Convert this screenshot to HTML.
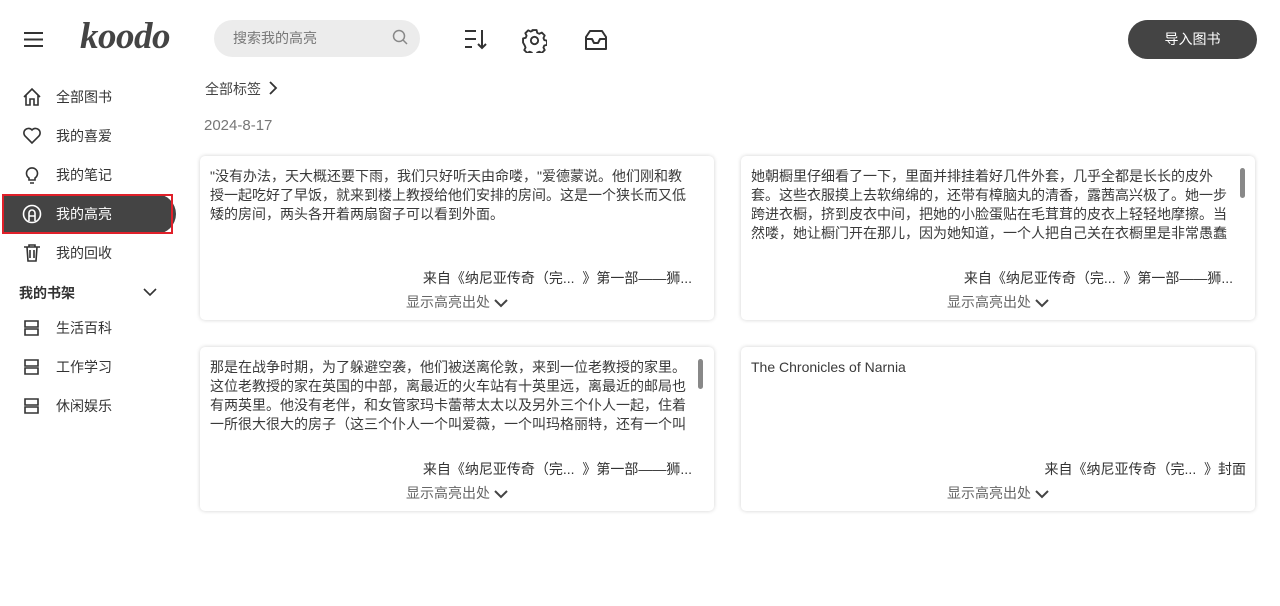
<!DOCTYPE html>
<html><head><meta charset="utf-8"><style>
*{margin:0;padding:0;box-sizing:border-box}
body{width:1280px;height:606px;background:#fff;font-family:"Liberation Sans","Noto Sans CJK SC",sans-serif;color:#333;position:relative;overflow:hidden}
.abs{position:absolute}
.nav{position:absolute;left:22px;font-size:14px;color:#333;display:flex;align-items:center}
.nav span{position:absolute;left:34px;white-space:nowrap}
.card{position:absolute;width:514px;height:164px;background:#fff;border-radius:5px;box-shadow:0 0 4px rgba(0,0,0,.18)}
.txt{position:absolute;left:10px;top:11px;width:478px;height:74px;overflow:hidden;font-size:14px;line-height:19px;color:#3a3a3a}
.src{position:absolute;right:22px;top:112px;font-size:14px;color:#333;white-space:nowrap}
.show{position:absolute;left:206px;top:136px;font-size:14px;color:#666;white-space:nowrap}
.show svg{vertical-align:middle;margin-left:4px}
.sb{position:absolute;width:5px;height:30px;background:#888;border-radius:3px;top:12px}
</style></head><body>
<svg class="abs" style="left:24px;top:31px" width="19" height="17"><path d="M0 2H19M0 8.5H19M0 15H19" stroke="#333" stroke-width="2"/></svg>
<div class="abs" style="left:80px;top:15px;font-family:'Liberation Serif',serif;font-style:italic;font-weight:bold;font-size:37px;color:#444;letter-spacing:-0.5px">koodo</div>
<div class="abs" style="left:214px;top:20px;width:206px;height:37px;background:#ececec;border-radius:19px"></div>
<div class="abs" style="left:233px;top:28px;font-size:14px;color:#777">搜索我的高亮</div>
<svg class="abs" style="left:392px;top:29px" width="17" height="17"><circle cx="7" cy="7" r="5.5" stroke="#888" stroke-width="1.5" fill="none"/><path d="M11 11L15 15" stroke="#888" stroke-width="1.5"/></svg>
<svg class="abs" style="left:464px;top:29px" width="24" height="22"><path d="M1 2H12M1 10H12M1 18H8M18 1V19M14 15L18 19L22 15" stroke="#333" stroke-width="2" fill="none"/></svg>
<svg class="abs" style="left:522px;top:28px" width="25" height="25" viewBox="0 0 24 24"><path d="M10 2h4l.6 2.6 2 1 2.4-1.2 2.8 2.8-1.2 2.4.8 2 2.6.6v4l-2.6.6-.8 2 1.2 2.4-2.8 2.8-2.4-1.2-2 .8-.6 2.6h-4l-.6-2.6-2-.8-2.4 1.2-2.8-2.8 1.2-2.4-.8-2L1 14v-4l2.6-.6.8-2-1.2-2.4 2.8-2.8 2.4 1.2 2-1z" stroke="#333" stroke-width="1.8" fill="none" stroke-linejoin="round"/><circle cx="12" cy="12" r="3.5" stroke="#333" stroke-width="1.8" fill="none"/></svg>
<svg class="abs" style="left:584px;top:29px" width="24" height="23"><path d="M2 8L6 2H18L22 8V20H2Z M2 10H8L10 14H14L16 10H22" stroke="#333" stroke-width="2" fill="none" stroke-linejoin="round"/></svg>
<div class="abs" style="left:1128px;top:20px;width:129px;height:39px;background:#444;border-radius:20px;color:#fff;font-size:14px;text-align:center;line-height:39px">导入图书</div>

<div class="nav" style="top:87px"><svg width="20" height="20"><path d="M2 10L10 2L18 10M4 8V18H8V12H12V18H16V8" stroke="#333" stroke-width="1.6" fill="none"/></svg><span>全部图书</span></div>
<div class="nav" style="top:126px"><svg width="20" height="20"><path d="M10 17L3 10A4 4 0 0 1 10 4A4 4 0 0 1 17 10Z" stroke="#333" stroke-width="1.6" fill="none"/></svg><span>我的喜爱</span></div>
<div class="nav" style="top:165px"><svg width="20" height="20"><path d="M7 13A5.5 5.5 0 1 1 13 13V15H7Z M8 18H12" stroke="#333" stroke-width="1.6" fill="none"/></svg><span>我的笔记</span></div>
<div class="abs" style="left:2px;top:194px;width:174px;height:40px;background:#444;border-radius:0 20px 20px 0"></div>
<div class="abs" style="left:2px;top:194px;width:171px;height:40px;border:2px solid #e0202a"></div>
<div class="nav" style="top:204px;color:#fff"><svg width="20" height="20"><circle cx="10" cy="10" r="8.5" stroke="#fff" stroke-width="1.6" fill="none"/><path d="M7 17V9A3 3 0 0 1 13 9V17M7 12H13" stroke="#fff" stroke-width="1.6" fill="none"/></svg><span>我的高亮</span></div>
<div class="nav" style="top:243px"><svg width="20" height="20"><path d="M2 4H18M5 4L6 18H14L15 4M8 7V15M12 7V15M7 4V2H13V4" stroke="#333" stroke-width="1.6" fill="none"/></svg><span>我的回收</span></div>
<div class="abs" style="left:19px;top:283px;font-size:14px;font-weight:bold;color:#333">我的书架</div>
<svg class="abs" style="left:143px;top:288px" width="14" height="9"><path d="M1 1L7 7L13 1" stroke="#333" stroke-width="1.6" fill="none"/></svg>
<div class="nav" style="top:318px"><svg width="20" height="20"><path d="M3 3H16V9H3ZM3 11H16V17H3Z" stroke="#333" stroke-width="1.6" fill="none"/></svg><span>生活百科</span></div>
<div class="nav" style="top:357px"><svg width="20" height="20"><path d="M3 3H16V9H3ZM3 11H16V17H3Z" stroke="#333" stroke-width="1.6" fill="none"/></svg><span>工作学习</span></div>
<div class="nav" style="top:396px"><svg width="20" height="20"><path d="M3 3H16V9H3ZM3 11H16V17H3Z" stroke="#333" stroke-width="1.6" fill="none"/></svg><span>休闲娱乐</span></div>

<div class="abs" style="left:205px;top:79px;font-size:14px;color:#444">全部标签</div>
<svg class="abs" style="left:269px;top:81px" width="9" height="14"><path d="M1 1L7 7L1 13" stroke="#333" stroke-width="1.8" fill="none"/></svg>
<div class="abs" style="left:204px;top:117px;font-size:15px;color:#777">2024-8-17</div>

<div class="card" style="left:200px;top:156px"><div class="txt">"没有办法，天大概还要下雨，我们只好听天由命喽，"爱德蒙说。他们刚和教授一起吃好了早饭，就来到楼上教授给他们安排的房间。这是一个狭长而又低矮的房间，两头各开着两扇窗子可以看到外面。</div><div class="src">来自《纳尼亚传奇（完...&nbsp;&nbsp;》第一部——狮...</div><div class="show">显示高亮出处<svg width="14" height="9"><path d="M1 1L7 7L13 1" stroke="#444" stroke-width="2" fill="none"/></svg></div></div>
<div class="card" style="left:741px;top:156px"><div class="txt">她朝橱里仔细看了一下，里面并排挂着好几件外套，几乎全都是长长的皮外套。这些衣服摸上去软绵绵的，还带有樟脑丸的清香，露茜高兴极了。她一步跨进衣橱，挤到皮衣中间，把她的小脸蛋贴在毛茸茸的皮衣上轻轻地摩擦。当然喽，她让橱门开在那儿，因为她知道，一个人把自己关在衣橱里是非常愚蠢的。</div><div class="sb" style="left:499px"></div><div class="src">来自《纳尼亚传奇（完...&nbsp;&nbsp;》第一部——狮...</div><div class="show">显示高亮出处<svg width="14" height="9"><path d="M1 1L7 7L13 1" stroke="#444" stroke-width="2" fill="none"/></svg></div></div>
<div class="card" style="left:200px;top:347px"><div class="txt">那是在战争时期，为了躲避空袭，他们被送离伦敦，来到一位老教授的家里。这位老教授的家在英国的中部，离最近的火车站有十英里远，离最近的邮局也有两英里。他没有老伴，和女管家玛卡蕾蒂太太以及另外三个仆人一起，住着一所很大很大的房子（这三个仆人一个叫爱薇，一个叫玛格丽特，还有一个叫贝蒂。</div><div class="sb" style="left:498px"></div><div class="src">来自《纳尼亚传奇（完...&nbsp;&nbsp;》第一部——狮...</div><div class="show">显示高亮出处<svg width="14" height="9"><path d="M1 1L7 7L13 1" stroke="#444" stroke-width="2" fill="none"/></svg></div></div>
<div class="card" style="left:741px;top:347px"><div class="txt">The Chronicles of Narnia</div><div class="src" style="right:9px">来自《纳尼亚传奇（完...&nbsp;&nbsp;》封面</div><div class="show">显示高亮出处<svg width="14" height="9"><path d="M1 1L7 7L13 1" stroke="#444" stroke-width="2" fill="none"/></svg></div></div>
</body></html>
